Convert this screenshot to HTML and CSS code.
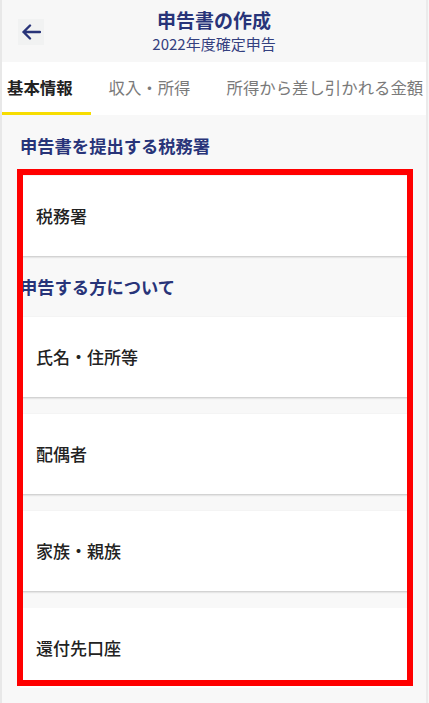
FILE: index.html
```html
<!DOCTYPE html>
<html lang="ja">
<head>
    <meta charset="UTF-8">
    <meta name="viewport" content="width=device-width, initial-scale=1.0">
    <title>申告書の作成</title>
    <link rel="stylesheet" href="styles.css">
</head>
<body>
    <div class="app">
        <div class="header">
            <button class="back-btn" onclick="history.back()">
                <svg width="20" height="16" viewBox="0 0 20 16">
                    <path d="M19 8H2.5M9 1.5L2.5 8L9 14.5" fill="none" stroke="#283479" stroke-width="2.4" stroke-linecap="round" stroke-linejoin="round"/>
                </svg>
            </button>
            <div class="title">申告書の作成</div>
            <div class="subtitle">2022年度確定申告</div>
        </div>

        <div class="tabs">
            <div class="tab-row">
                <div class="tab active">基本情報</div>
                <div class="tab">収入・所得</div>
                <div class="tab">所得から差し引かれる金額</div>
            </div>
        </div>

        <div class="content">
            <div class="section-title">申告書を提出する税務署</div>
            <div class="item">税務署</div>

            <div class="section-title">申告する方について</div>
            <div class="item">氏名・住所等</div>
            <div class="item">配偶者</div>
            <div class="item">家族・親族</div>
            <div class="item last">還付先口座</div>

            <!-- highlight frame around the item list -->
            <div class="highlight"></div>
        </div>
    </div>
</body>
</html>
```

FILE: styles.css
```css
html, body {margin: 0; padding: 0; height: 100%;}
body {font-family: "Noto Sans CJK JP", "Noto Sans", sans-serif; background-color: #f8f8f8; overflow: hidden;}
.app {height: 100%; border-left: 2px solid #e8e8e8; border-right: 2px solid #ebebeb; margin-right: 1px; box-sizing: border-box; position: relative;}

.header {position: relative; height: 62px; background-color: #f7f7f7; text-align: center;}
.back-btn {position: absolute; left: 16px; top: 19px; width: 26px; height: 26px; padding: 0; border: none; background-color: #f1f2f2; display: flex; align-items: center; justify-content: center; cursor: pointer;}
.title {padding-top: 6px; font-size: 19px; line-height: 27px; font-weight: bold; color: #283479;}
.subtitle {font-size: 15px; line-height: 22px; color: #34407f;}

.tabs {height: 53px; background-color: #fff; overflow: hidden;}
.tab-row {display: flex; margin-left: -13px; height: 100%; white-space: nowrap;}
.tab {padding: 0 18px; font-size: 16.4px; line-height: 50px; color: #7a7a7a; border-bottom: 3px solid transparent;}
.tab.active {color: #222; font-weight: bold; border-bottom-color: #f7dd00;}

.content {position: relative; padding: 0 16px 0 18px;}
.section-title {height: 61px; line-height: 61px; font-size: 17.3px; font-weight: bold; color: #283479;}
.item {height: 80px; line-height: 80px; padding-left: 16px; margin-bottom: 17px; background-color: #fff; font-size: 17px; font-weight: 500; color: #222; box-shadow: 0 1px 2px rgba(0, 0, 0, 0.22);}
.item.last {box-shadow: none;}
.section-title + .item + .section-title {margin-top: -17px;}

.highlight {position: absolute; left: 15px; top: 54px; width: 384px; height: 505px; border: 6px solid #ff0000;}
```
